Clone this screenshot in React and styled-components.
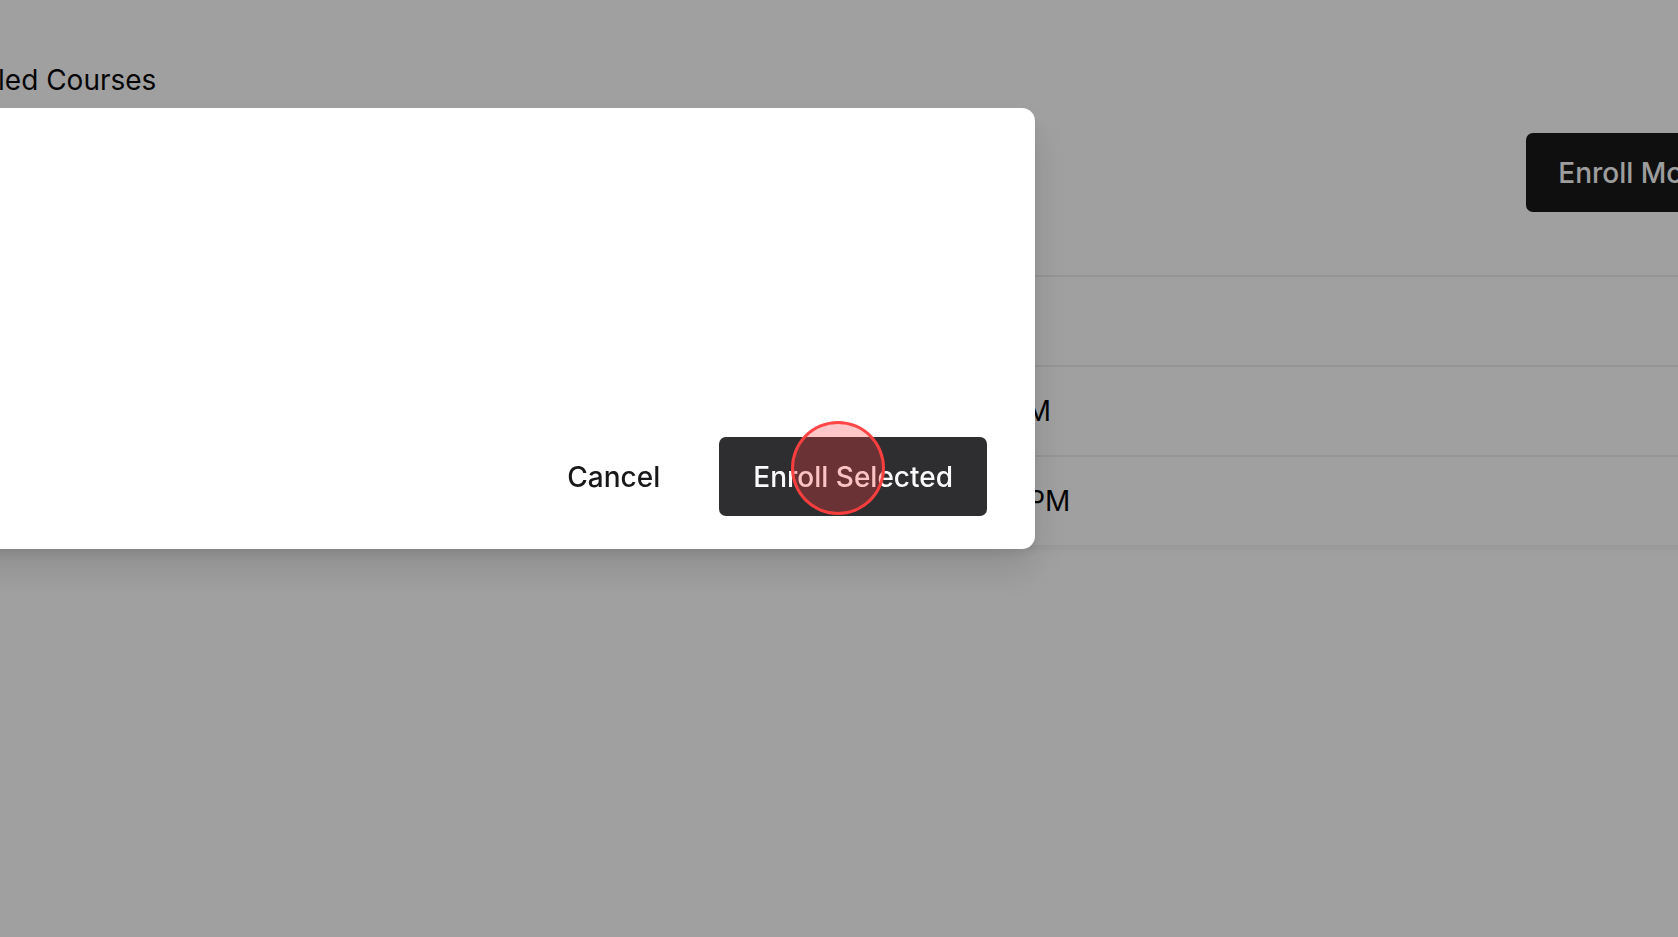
import React from 'react'
import styled, { createGlobalStyle } from 'styled-components'

const GlobalStyle = createGlobalStyle`
    html, body {
        margin: 0;
        padding: 0;
        background: #ffffff;
        overflow: hidden;
    }
    body {
        font-family: Inter, "Noto Sans", "Liberation Sans", sans-serif;
        color: #09090b;
    }
    * { box-sizing: border-box; }
`

const courses = [
    { id: 1, name: 'Introduction to Psychology', instructor: 'Dr. Sarah Lee', schedule: 'Online' },
    { id: 2, name: 'Calculus II', instructor: 'Prof. James Wu', schedule: 'Tue 9:00 AM' },
    { id: 3, name: 'Modern World History', instructor: 'Dr. Ana Ruiz', schedule: 'Mon 12:00 PM' }
]

function App() {
    const rows = courses.map(item => {
        return (
            <Row key={item.id}>
                <Cell>{item.name}</Cell>
                <Cell>{item.instructor}</Cell>
                <Cell>{item.schedule}</Cell>
            </Row>
        )
    })

    return (
        <>
            <GlobalStyle />
            <Viewport>
                <Page>
                    <Heading>Enrolled Courses</Heading>
                    <Card>
                        <Toolbar>
                            <DarkButton>Enroll More</DarkButton>
                        </Toolbar>
                        {rows}
                    </Card>
                </Page>
            </Viewport>

            <Overlay />
            <Dialog>
                <DialogBody />
                <DialogFooter>
                    <GhostButton>Cancel</GhostButton>
                    <PrimaryButton>Enroll Selected</PrimaryButton>
                </DialogFooter>
            </Dialog>
            <ClickMark />
        </>
    )
}

export default App

const Viewport = styled.div`
    width: 100vw;
    height: 100vh;
    display: flex;
    flex-direction: column;
    align-items: center;
`

const Page = styled.div`
    flex: none;
    width: 1830px;
    padding: 60px 12px 0 7px;
    display: flex;
    flex-direction: column;
`

const Heading = styled.h2`
    margin: 0;
    font-size: 28px;
    line-height: 40px;
    font-weight: 400;
    color: #09090b;
`

const Card = styled.div`
    margin-top: 33px;
    background: #ffffff;
    box-shadow: 0 4px 8px rgba(0, 0, 0, 0.06);
`

const Toolbar = styled.div`
    display: flex;
    justify-content: flex-end;
    padding-bottom: 63px;
`

const DarkButton = styled.button`
    height: 79px;
    padding: 0 32px;
    border: none;
    border-radius: 7px;
    background: #18181b;
    color: #fafafa;
    font-family: inherit;
    font-size: 28px;
    font-weight: 500;
`

const Row = styled.div`
    display: grid;
    grid-template-columns: 537px 397px 1fr;
    height: 90px;
    align-items: center;
    border-top: 2px solid #ededee;
`

const Cell = styled.div`
    padding-left: 16px;
    font-size: 28px;
    color: #09090b;
    white-space: nowrap;
`

const Overlay = styled.div`
    position: fixed;
    inset: 0;
    background: rgba(0, 0, 0, 0.373);
`

const Dialog = styled.div`
    position: fixed;
    top: 108px;
    left: -420px;
    width: 1455px;
    height: 441px;
    background: #ffffff;
    border-radius: 13px;
    box-shadow: 0 20px 40px rgba(0, 0, 0, 0.12), 0 6px 12px rgba(0, 0, 0, 0.06);
    display: flex;
    flex-direction: column;
    padding: 0 48px 33px 48px;
`

const DialogBody = styled.div`
    flex: 1;
`

const DialogFooter = styled.div`
    display: flex;
    justify-content: flex-end;
    align-items: center;
    gap: 35px;
`

const GhostButton = styled.button`
    height: 79px;
    padding: 0 24px;
    border: none;
    border-radius: 7px;
    background: transparent;
    color: #18181b;
    font-family: inherit;
    font-size: 28px;
    font-weight: 500;
`

const PrimaryButton = styled.button`
    height: 79px;
    padding: 0 34px;
    border: none;
    border-radius: 7px;
    background: #2e2e31;
    color: #fafafa;
    font-family: inherit;
    font-size: 28px;
    font-weight: 500;
`

const ClickMark = styled.div`
    position: fixed;
    left: 791px;
    top: 421px;
    width: 94px;
    height: 94px;
    border-radius: 50%;
    border: 3px solid rgba(255, 64, 64, 0.95);
    background: rgba(255, 63, 63, 0.29);
    pointer-events: none;
`
